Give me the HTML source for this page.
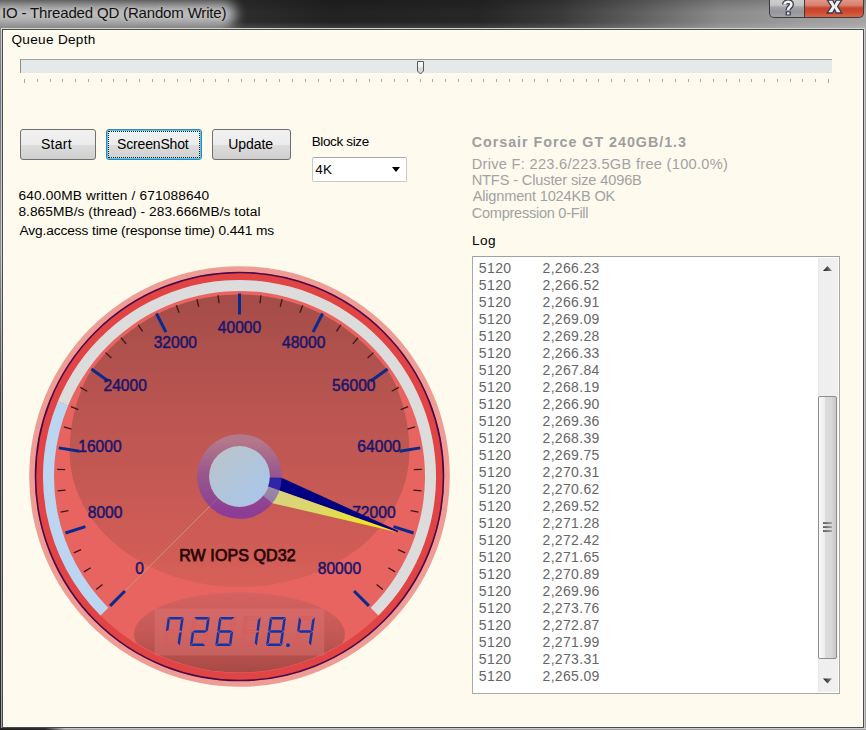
<!DOCTYPE html>
<html><head><meta charset="utf-8">
<style>
*{margin:0;padding:0;box-sizing:border-box}
html,body{width:866px;height:730px;overflow:hidden;background:#FEFAEE}
body{position:relative;font-family:"Liberation Sans",sans-serif;font-size:13px;color:#000}
.abs{position:absolute}
#titlebar{position:absolute;left:0;top:0;width:866px;height:29px;background:linear-gradient(90deg,#3a3a3a 0,#2c2c2c 250px,#222 330px,#262626 480px,#3a3a3a 560px,#606060 640px,#8a8a8a 720px,#9c9c9c 800px,#a4a4a4 866px)}
#titleshade{position:absolute;left:0;top:0;width:866px;height:29px;
 background:linear-gradient(180deg,rgba(0,0,0,0.18) 0,rgba(0,0,0,0) 12px,rgba(255,255,255,0) 22px,rgba(255,255,255,0.15) 29px)}
#title{position:absolute;left:2px;top:3.8px;font-size:15px;color:#111;white-space:nowrap;letter-spacing:-0.167px;text-shadow:0 0 4px #cfcfcf}
#glow{position:absolute;left:-16px;top:0px;width:252px;height:28px;border-radius:14px;background:#b8b8b8;filter:blur(6px)}
#framel{position:absolute;left:0;top:28px;width:1px;height:702px;background:linear-gradient(180deg,#8a8a8a 0,#707880 72px,#909090 222px,#404040 372px,#303030 572px,#2a2a2a 702px)}
#framel2{position:absolute;left:1px;top:28px;width:1px;height:702px;background:linear-gradient(180deg,#d0d0d0 0,#c0c8c8 72px,#d0d0d0 222px,#a8a8a8 372px,#a0a0a0 572px,#a0a0a0 702px)}
#framer{position:absolute;left:864px;top:28px;width:2px;height:702px;background:linear-gradient(90deg,#d0d0d0 50%,#a0a0a0 50%)}
#frameb{position:absolute;left:0;top:728px;width:866px;height:1px;background:linear-gradient(90deg,#282828 0,#303030 45px,#c8c8c8 65px,#d0d0d0 866px)}
#frameb2{position:absolute;left:0;top:729px;width:866px;height:1px;background:linear-gradient(90deg,#1c1c1c 0,#242424 45px,#a0a0a0 65px,#a0a0a0 866px)}
#content{position:absolute;left:2px;top:29px;width:862px;height:699px;background:#FEFAEE;border:1px solid #4a4a4a;box-shadow:inset 0 0 0 1px #fffff6,0 -1px 0 0 #d4d4d4}
.cap{position:absolute;top:-1px;height:20px;border:1px solid #3c3c3c;border-top:none}
#help{left:769px;width:36px;height:19px;border-radius:0 0 0 5px;background:linear-gradient(180deg,#cfcfcf 0,#c4c4c4 35%,#a4a4a6 45%,#96969c 70%,#a2a2aa 100%)}
#close{left:804px;width:60px;height:19px;border-radius:0 0 5px 0;background:linear-gradient(180deg,#e39a8c 0,#d8806e 35%,#c44630 50%,#cc4a2c 70%,#d8644a 100%)}
.lbl{position:absolute;white-space:nowrap;font-size:13px;letter-spacing:0.4px}
.btn{position:absolute;top:129px;height:31px;border:1px solid #707070;border-radius:3px;
 background:linear-gradient(180deg,#f2f2f2 0,#ebebeb 50%,#dddddd 51%,#cfcfcf 100%);text-align:center;line-height:28px;font-size:13.5px;letter-spacing:0.2px}
.bt{position:absolute;top:6.1px;white-space:nowrap;line-height:normal;font-size:14px}
.stick{position:absolute;top:79px;width:1px;height:3px;background:#a8a8a8}
.row{position:absolute;left:0;height:17px;width:340px;white-space:nowrap;color:#666;font-size:14px}
.c1{position:absolute;left:5.8px;top:1px;letter-spacing:0.4px}
.c2{position:absolute;left:69.5px;top:1px;letter-spacing:0.343px}
.gray{color:#a2a2a2}
</style></head><body>
<div id="titlebar"></div>
<div id="glow"></div>
<div id="titleshade"></div>
<div id="title">IO - Threaded QD (Random Write)</div>
<div class="cap" id="help"></div>
<div class="cap" id="close"></div>
<svg class="abs" style="left:0;top:0" width="866" height="30" viewBox="0 0 866 30">
 <g fill="none" stroke-linejoin="round">
  <path d="M784.6,4.6 C784.6,1.2 791.4,0.6 791.4,4.2 C791.4,6.8 788.2,7.2 788.2,9.6 L788.2,10.2" stroke="#3a3c4e" stroke-width="5.2" stroke-linecap="butt"/>
  <rect x="785.6" y="11.4" width="5.2" height="4" fill="#3a3c4e" stroke="none"/>
  <path d="M784.6,4.6 C784.6,1.2 791.4,0.6 791.4,4.2 C791.4,6.8 788.2,7.2 788.2,9.6 L788.2,10.2" stroke="#f2f2f2" stroke-width="2.6" stroke-linecap="butt"/>
  <rect x="786.9" y="12.4" width="2.6" height="2" fill="#f2f2f2" stroke="none"/>
  <polygon points="827.2,0 832.6,0 834.5,3.6 836.4,0 841.8,0 837.6,6.4 841.8,13 836.4,13 834.5,9.4 832.6,13 827.2,13 831.4,6.4" fill="#f0f0f0" stroke="#3a3a4e" stroke-width="1.3" stroke-linejoin="miter"/>
 </g>
</svg>
<div id="framel"></div><div id="framel2"></div><div id="framer"></div><div id="frameb"></div><div id="frameb2"></div>
<div id="content"></div>

<div class="lbl" style="left:11.5px;top:32.1px;font-size:13.6px;letter-spacing:0.3px">Queue Depth</div>
<!-- slider -->
<div class="abs" style="left:20px;top:59px;width:812px;height:14px;background:#E6E9EA;border-top:1px solid #a4a4a4;border-left:1px solid #8c8c8c"></div>
<svg class="abs" style="left:410px;top:55px" width="20" height="24" viewBox="410 55 20 24">
 <defs><linearGradient id="thg" x1="0" y1="0" x2="0" y2="1"><stop offset="0" stop-color="#fdfdfd"/><stop offset="0.4" stop-color="#f0f0f0"/><stop offset="0.5" stop-color="#dedede"/><stop offset="1" stop-color="#d4d4d4"/></linearGradient></defs>
 <path d="M417.5,61.5 H423.5 V71 L420.5,74 L417.5,71 Z" fill="url(#thg)" stroke="#5a5a5a" stroke-width="1"/>
 <path d="M418.5,62.5 H422.5" stroke="#ffffff" stroke-width="1"/>
</svg>
<div class="stick" style="left:24px;height:4px"></div>
<div class="stick" style="left:37px;height:3px"></div>
<div class="stick" style="left:50px;height:3px"></div>
<div class="stick" style="left:62px;height:3px"></div>
<div class="stick" style="left:75px;height:3px"></div>
<div class="stick" style="left:88px;height:3px"></div>
<div class="stick" style="left:101px;height:3px"></div>
<div class="stick" style="left:113px;height:3px"></div>
<div class="stick" style="left:126px;height:3px"></div>
<div class="stick" style="left:139px;height:3px"></div>
<div class="stick" style="left:152px;height:3px"></div>
<div class="stick" style="left:164px;height:3px"></div>
<div class="stick" style="left:177px;height:3px"></div>
<div class="stick" style="left:190px;height:3px"></div>
<div class="stick" style="left:203px;height:3px"></div>
<div class="stick" style="left:215px;height:3px"></div>
<div class="stick" style="left:228px;height:3px"></div>
<div class="stick" style="left:241px;height:3px"></div>
<div class="stick" style="left:254px;height:3px"></div>
<div class="stick" style="left:266px;height:3px"></div>
<div class="stick" style="left:279px;height:3px"></div>
<div class="stick" style="left:292px;height:3px"></div>
<div class="stick" style="left:305px;height:3px"></div>
<div class="stick" style="left:318px;height:3px"></div>
<div class="stick" style="left:330px;height:3px"></div>
<div class="stick" style="left:343px;height:3px"></div>
<div class="stick" style="left:356px;height:3px"></div>
<div class="stick" style="left:369px;height:3px"></div>
<div class="stick" style="left:381px;height:3px"></div>
<div class="stick" style="left:394px;height:3px"></div>
<div class="stick" style="left:407px;height:3px"></div>
<div class="stick" style="left:420px;height:3px"></div>
<div class="stick" style="left:432px;height:3px"></div>
<div class="stick" style="left:445px;height:3px"></div>
<div class="stick" style="left:458px;height:3px"></div>
<div class="stick" style="left:471px;height:3px"></div>
<div class="stick" style="left:483px;height:3px"></div>
<div class="stick" style="left:496px;height:3px"></div>
<div class="stick" style="left:509px;height:3px"></div>
<div class="stick" style="left:522px;height:3px"></div>
<div class="stick" style="left:534px;height:3px"></div>
<div class="stick" style="left:547px;height:3px"></div>
<div class="stick" style="left:560px;height:3px"></div>
<div class="stick" style="left:573px;height:3px"></div>
<div class="stick" style="left:586px;height:3px"></div>
<div class="stick" style="left:598px;height:3px"></div>
<div class="stick" style="left:611px;height:3px"></div>
<div class="stick" style="left:624px;height:3px"></div>
<div class="stick" style="left:637px;height:3px"></div>
<div class="stick" style="left:649px;height:3px"></div>
<div class="stick" style="left:662px;height:3px"></div>
<div class="stick" style="left:675px;height:3px"></div>
<div class="stick" style="left:688px;height:3px"></div>
<div class="stick" style="left:700px;height:3px"></div>
<div class="stick" style="left:713px;height:3px"></div>
<div class="stick" style="left:726px;height:3px"></div>
<div class="stick" style="left:739px;height:3px"></div>
<div class="stick" style="left:751px;height:3px"></div>
<div class="stick" style="left:764px;height:3px"></div>
<div class="stick" style="left:777px;height:3px"></div>
<div class="stick" style="left:790px;height:3px"></div>
<div class="stick" style="left:802px;height:3px"></div>
<div class="stick" style="left:815px;height:3px"></div>
<div class="stick" style="left:828px;height:4px"></div>

<div class="btn" style="left:20px;width:76px"><span class="bt" style="left:20px;letter-spacing:0.25px">Start</span></div>
<div class="btn" style="left:106px;width:96px;border-color:#3c7fb1;box-shadow:inset 0 0 0 1px #48cdf6">
 <div class="abs" style="left:1px;top:1px;right:1px;bottom:1px;border:1px dotted #222"></div><span class="bt" style="left:10px;letter-spacing:-0.156px">ScreenShot</span></div>
<div class="btn" style="left:212px;width:79px"><span class="bt" style="left:15.3px;letter-spacing:-0.08px">Update</span></div>

<div class="lbl" style="left:311.7px;top:133.6px;font-size:13.5px;letter-spacing:-0.36px">Block size</div>
<div class="abs" style="left:312px;top:157px;width:95px;height:25px;background:#fff;border:1px solid #c8c8c8;border-top-color:#a8a8a8;border-radius:2px"></div>
<div class="lbl" style="left:315.2px;top:161.8px;font-size:13.5px;letter-spacing:0.3px">4K</div>
<div class="abs" style="left:392px;top:167px;width:0;height:0;border-left:4.5px solid transparent;border-right:4.5px solid transparent;border-top:5px solid #000"></div>

<div class="lbl" style="left:18.4px;top:187.6px;font-size:13.7px;letter-spacing:0.163px">640.00MB written / 671088640</div>
<div class="lbl" style="left:18.4px;top:203.8px;font-size:13.7px;letter-spacing:0.065px">8.865MB/s (thread) - 283.666MB/s total</div>
<div class="lbl" style="left:19.4px;top:223.4px;font-size:13.7px;letter-spacing:-0.092px">Avg.access time (response time) 0.441 ms</div>

<div class="lbl gray" style="left:471.7px;top:133.6px;font-weight:bold;font-size:14.3px;letter-spacing:0.976px;color:#9e9e9e">Corsair Force GT 240GB/1.3</div>
<div class="lbl gray" style="left:471.7px;top:156px;font-size:14.6px;letter-spacing:0.297px">Drive F: 223.6/223.5GB free (100.0%)</div>
<div class="lbl gray" style="left:471.7px;top:172px;font-size:14.6px;letter-spacing:-0.142px">NTFS - Cluster size 4096B</div>
<div class="lbl gray" style="left:472.7px;top:188px;font-size:14.6px;letter-spacing:-0.189px">Alignment 1024KB OK</div>
<div class="lbl gray" style="left:471.7px;top:204.8px;font-size:14.6px;letter-spacing:-0.282px">Compression 0-Fill</div>
<div class="lbl" style="left:472px;top:232.5px;font-size:13.6px;letter-spacing:0.4px">Log</div>

<!-- listbox -->
<div class="abs" style="left:472px;top:256px;width:368px;height:438px;background:#fff;border:1px solid #a8a8a8;border-top-color:#a0a0a0">
 <div class="abs" style="left:0;top:2px;width:346px;height:432px;overflow:hidden">
<div class="row" style="top:0px"><span class="c1">5120</span><span class="c2">2,266.23</span></div>
<div class="row" style="top:17px"><span class="c1">5120</span><span class="c2">2,266.52</span></div>
<div class="row" style="top:34px"><span class="c1">5120</span><span class="c2">2,266.91</span></div>
<div class="row" style="top:51px"><span class="c1">5120</span><span class="c2">2,269.09</span></div>
<div class="row" style="top:68px"><span class="c1">5120</span><span class="c2">2,269.28</span></div>
<div class="row" style="top:85px"><span class="c1">5120</span><span class="c2">2,266.33</span></div>
<div class="row" style="top:102px"><span class="c1">5120</span><span class="c2">2,267.84</span></div>
<div class="row" style="top:119px"><span class="c1">5120</span><span class="c2">2,268.19</span></div>
<div class="row" style="top:136px"><span class="c1">5120</span><span class="c2">2,266.90</span></div>
<div class="row" style="top:153px"><span class="c1">5120</span><span class="c2">2,269.36</span></div>
<div class="row" style="top:170px"><span class="c1">5120</span><span class="c2">2,268.39</span></div>
<div class="row" style="top:187px"><span class="c1">5120</span><span class="c2">2,269.75</span></div>
<div class="row" style="top:204px"><span class="c1">5120</span><span class="c2">2,270.31</span></div>
<div class="row" style="top:221px"><span class="c1">5120</span><span class="c2">2,270.62</span></div>
<div class="row" style="top:238px"><span class="c1">5120</span><span class="c2">2,269.52</span></div>
<div class="row" style="top:255px"><span class="c1">5120</span><span class="c2">2,271.28</span></div>
<div class="row" style="top:272px"><span class="c1">5120</span><span class="c2">2,272.42</span></div>
<div class="row" style="top:289px"><span class="c1">5120</span><span class="c2">2,271.65</span></div>
<div class="row" style="top:306px"><span class="c1">5120</span><span class="c2">2,270.89</span></div>
<div class="row" style="top:323px"><span class="c1">5120</span><span class="c2">2,269.96</span></div>
<div class="row" style="top:340px"><span class="c1">5120</span><span class="c2">2,273.76</span></div>
<div class="row" style="top:357px"><span class="c1">5120</span><span class="c2">2,272.87</span></div>
<div class="row" style="top:374px"><span class="c1">5120</span><span class="c2">2,271.99</span></div>
<div class="row" style="top:391px"><span class="c1">5120</span><span class="c2">2,273.31</span></div>
<div class="row" style="top:408px"><span class="c1">5120</span><span class="c2">2,265.09</span></div>
 </div>
 <div class="abs" style="left:345px;top:1px;width:20px;height:434px;background:linear-gradient(90deg,#e6e6e6 0,#efefef 2px,#f0f0f0 100%)"></div>
 <div class="abs" style="left:345px;top:139px;width:19px;height:263px;border:1px solid #8e8e8e;border-radius:2px;background:linear-gradient(90deg,#fafafa 0,#ececec 35%,#dcdcdc 38%,#d8d8d8 75%,#c6c6c6 100%)"></div>
 <svg class="abs" style="left:345px;top:0" width="20" height="436" viewBox="0 0 20 436">
  <defs><linearGradient id="arg" x1="0" y1="0" x2="1" y2="0"><stop offset="0" stop-color="#1a1a1a"/><stop offset="1" stop-color="#8a8a8a"/></linearGradient></defs>
  <polygon points="5,14 9.5,9 14,14" fill="url(#arg)"/>
  <polygon points="5,421.5 14,421.5 9.5,426.5" fill="url(#arg)"/>
  <g><rect x="5" y="265.4" width="9" height="1.3" fill="url(#arg)"/><rect x="5" y="269.4" width="9" height="1.3" fill="url(#arg)"/><rect x="5" y="273.4" width="9" height="1.3" fill="url(#arg)"/></g>
 </svg>
</div>

<svg width="866" height="730" viewBox="0 0 866 730" style="position:absolute;left:0;top:0">
<defs>
<linearGradient id="dark" gradientUnits="userSpaceOnUse" x1="0" y1="290" x2="0" y2="591">
 <stop offset="0" stop-color="#A44C48"/><stop offset="0.4" stop-color="#BA5551"/><stop offset="0.85" stop-color="#D05C56"/><stop offset="1" stop-color="#D8605A"/>
</linearGradient>
<clipPath id="faceclip2"><circle cx="239.5" cy="476.5" r="196"/></clipPath>
<clipPath id="faceclip"><circle cx="239.5" cy="476.5" r="182"/></clipPath>
<linearGradient id="ringg" x1="0" y1="0" x2="0" y2="1">
 <stop offset="0" stop-color="#A8A0D0" stop-opacity="0.45"/><stop offset="0.5" stop-color="#6050D0" stop-opacity="0.47"/><stop offset="1" stop-color="#6428C0" stop-opacity="0.6"/>
</linearGradient>
<linearGradient id="hubg" x1="0" y1="0" x2="1" y2="1">
 <stop offset="0" stop-color="#BCC4C8"/><stop offset="1" stop-color="#A6C6EE"/>
</linearGradient>
<linearGradient id="yelg" gradientUnits="userSpaceOnUse" x1="239.5" y1="476.5" x2="397.6" y2="532.2">
 <stop offset="0" stop-color="#D4D090"/><stop offset="0.5" stop-color="#DCD868"/><stop offset="1" stop-color="#F2EE00"/>
</linearGradient>
<linearGradient id="lcdg" x1="0" y1="0" x2="0" y2="1">
 <stop offset="0" stop-color="#D46260"/><stop offset="0.45" stop-color="#C65A56"/><stop offset="1" stop-color="#A64844"/>
</linearGradient>
<filter id="lblur" x="-5%" y="-5%" width="110%" height="110%"><feGaussianBlur stdDeviation="0.35"/></filter>
</defs>
<circle cx="239.5" cy="476.5" r="210.3" fill="#EE9C94"/>
<circle cx="239.5" cy="476.5" r="204.5" fill="#E04444"/>
<circle cx="239.5" cy="476.5" r="204" fill="none" stroke="#4A0A4A" stroke-width="1.6"/>
<circle cx="239.5" cy="476.5" r="196.5" fill="#E86460"/>
<path d="M100.55,615.45 A196.5,196.5 0 0 1 57.96,401.30 L68.12,405.51 A185.5,185.5 0 0 0 108.33,607.67 Z" fill="#BCD6F2"/>
<path d="M57.96,401.30 A196.5,196.5 0 1 1 378.45,615.45 L370.67,607.67 A185.5,185.5 0 1 0 68.12,405.51 Z" fill="#DCDCDC"/>
<path d="M69.5,452 A170,170 0 0 1 409.5,452 A170,135 0 0 1 69.5,452 Z" fill="url(#dark)" clip-path="url(#faceclip)"/>
<line x1="110.10" y1="605.90" x2="124.95" y2="591.05" stroke="#0A2A8C" stroke-width="3"/>
<line x1="96.18" y1="589.48" x2="102.46" y2="584.53" stroke="#3A1818" stroke-width="1.3"/>
<line x1="83.89" y1="571.86" x2="90.71" y2="567.68" stroke="#3A1818" stroke-width="1.3"/>
<line x1="73.76" y1="552.91" x2="81.03" y2="549.56" stroke="#3A1818" stroke-width="1.3"/>
<line x1="65.46" y1="533.05" x2="85.43" y2="526.56" stroke="#0A2A8C" stroke-width="3"/>
<line x1="60.51" y1="512.10" x2="68.35" y2="510.54" stroke="#3A1818" stroke-width="1.3"/>
<line x1="57.56" y1="490.82" x2="65.54" y2="490.19" stroke="#3A1818" stroke-width="1.3"/>
<line x1="57.14" y1="469.34" x2="65.13" y2="469.65" stroke="#3A1818" stroke-width="1.3"/>
<line x1="58.75" y1="447.87" x2="79.49" y2="451.16" stroke="#0A2A8C" stroke-width="3"/>
<line x1="63.85" y1="426.96" x2="71.55" y2="429.13" stroke="#3A1818" stroke-width="1.3"/>
<line x1="70.89" y1="406.66" x2="78.28" y2="409.72" stroke="#3A1818" stroke-width="1.3"/>
<line x1="80.27" y1="387.33" x2="87.25" y2="391.24" stroke="#3A1818" stroke-width="1.3"/>
<line x1="91.45" y1="368.94" x2="108.44" y2="381.28" stroke="#0A2A8C" stroke-width="3"/>
<line x1="105.49" y1="352.62" x2="111.36" y2="358.05" stroke="#3A1818" stroke-width="1.3"/>
<line x1="120.98" y1="337.73" x2="126.17" y2="343.81" stroke="#3A1818" stroke-width="1.3"/>
<line x1="138.11" y1="324.76" x2="142.55" y2="331.41" stroke="#3A1818" stroke-width="1.3"/>
<line x1="156.42" y1="313.45" x2="165.95" y2="332.16" stroke="#0A2A8C" stroke-width="3"/>
<line x1="176.33" y1="305.28" x2="179.10" y2="312.79" stroke="#3A1818" stroke-width="1.3"/>
<line x1="196.90" y1="299.04" x2="198.76" y2="306.82" stroke="#3A1818" stroke-width="1.3"/>
<line x1="218.05" y1="295.27" x2="218.99" y2="303.21" stroke="#3A1818" stroke-width="1.3"/>
<line x1="239.50" y1="293.50" x2="239.50" y2="314.50" stroke="#0A2A8C" stroke-width="3"/>
<line x1="260.95" y1="295.27" x2="260.01" y2="303.21" stroke="#3A1818" stroke-width="1.3"/>
<line x1="282.10" y1="299.04" x2="280.24" y2="306.82" stroke="#3A1818" stroke-width="1.3"/>
<line x1="302.67" y1="305.28" x2="299.90" y2="312.79" stroke="#3A1818" stroke-width="1.3"/>
<line x1="322.58" y1="313.45" x2="313.05" y2="332.16" stroke="#0A2A8C" stroke-width="3"/>
<line x1="340.89" y1="324.76" x2="336.45" y2="331.41" stroke="#3A1818" stroke-width="1.3"/>
<line x1="358.02" y1="337.73" x2="352.83" y2="343.81" stroke="#3A1818" stroke-width="1.3"/>
<line x1="373.51" y1="352.62" x2="367.64" y2="358.05" stroke="#3A1818" stroke-width="1.3"/>
<line x1="387.55" y1="368.94" x2="370.56" y2="381.28" stroke="#0A2A8C" stroke-width="3"/>
<line x1="398.73" y1="387.33" x2="391.75" y2="391.24" stroke="#3A1818" stroke-width="1.3"/>
<line x1="408.11" y1="406.66" x2="400.72" y2="409.72" stroke="#3A1818" stroke-width="1.3"/>
<line x1="415.15" y1="426.96" x2="407.45" y2="429.13" stroke="#3A1818" stroke-width="1.3"/>
<line x1="420.25" y1="447.87" x2="399.51" y2="451.16" stroke="#0A2A8C" stroke-width="3"/>
<line x1="421.86" y1="469.34" x2="413.87" y2="469.65" stroke="#3A1818" stroke-width="1.3"/>
<line x1="421.44" y1="490.82" x2="413.46" y2="490.19" stroke="#3A1818" stroke-width="1.3"/>
<line x1="418.49" y1="512.10" x2="410.65" y2="510.54" stroke="#3A1818" stroke-width="1.3"/>
<line x1="413.54" y1="533.05" x2="393.57" y2="526.56" stroke="#0A2A8C" stroke-width="3"/>
<line x1="405.24" y1="552.91" x2="397.97" y2="549.56" stroke="#3A1818" stroke-width="1.3"/>
<line x1="395.11" y1="571.86" x2="388.29" y2="567.68" stroke="#3A1818" stroke-width="1.3"/>
<line x1="382.82" y1="589.48" x2="376.54" y2="584.53" stroke="#3A1818" stroke-width="1.3"/>
<line x1="368.90" y1="605.90" x2="354.05" y2="591.05" stroke="#0A2A8C" stroke-width="3"/>
<text x="139.59" y="573.91" text-anchor="middle" font-family="Liberation Sans" font-size="15.6" fill="#181266" stroke="#221A6E" stroke-width="0.5">0</text>
<text x="105.12" y="517.66" text-anchor="middle" font-family="Liberation Sans" font-size="15.6" fill="#181266" stroke="#221A6E" stroke-width="0.5">8000</text>
<text x="99.94" y="451.90" text-anchor="middle" font-family="Liberation Sans" font-size="15.6" fill="#181266" stroke="#221A6E" stroke-width="0.5">16000</text>
<text x="125.19" y="390.95" text-anchor="middle" font-family="Liberation Sans" font-size="15.6" fill="#181266" stroke="#221A6E" stroke-width="0.5">24000</text>
<text x="175.35" y="348.10" text-anchor="middle" font-family="Liberation Sans" font-size="15.6" fill="#181266" stroke="#221A6E" stroke-width="0.5">32000</text>
<text x="239.50" y="332.70" text-anchor="middle" font-family="Liberation Sans" font-size="15.6" fill="#181266" stroke="#221A6E" stroke-width="0.5">40000</text>
<text x="303.65" y="348.10" text-anchor="middle" font-family="Liberation Sans" font-size="15.6" fill="#181266" stroke="#221A6E" stroke-width="0.5">48000</text>
<text x="353.81" y="390.95" text-anchor="middle" font-family="Liberation Sans" font-size="15.6" fill="#181266" stroke="#221A6E" stroke-width="0.5">56000</text>
<text x="379.06" y="451.90" text-anchor="middle" font-family="Liberation Sans" font-size="15.6" fill="#181266" stroke="#221A6E" stroke-width="0.5">64000</text>
<text x="373.88" y="517.66" text-anchor="middle" font-family="Liberation Sans" font-size="15.6" fill="#181266" stroke="#221A6E" stroke-width="0.5">72000</text>
<text x="339.41" y="573.91" text-anchor="middle" font-family="Liberation Sans" font-size="15.6" fill="#181266" stroke="#221A6E" stroke-width="0.5">80000</text>
<text x="237.5" y="561" text-anchor="middle" font-family="Liberation Sans" font-size="16" fill="#260404" stroke="#2A0606" stroke-width="0.75" letter-spacing="0.1">RW IOPS QD32</text>
<ellipse cx="239.5" cy="634" rx="105.5" ry="41.5" fill="url(#lcdg)" clip-path="url(#faceclip2)"/>
<rect x="154.6" y="608.5" width="169.6" height="47" fill="#E07878" fill-opacity="0.42"/>
<polygon points="168.15,617.10 183.45,617.10 180.60,619.60 170.30,619.60" fill="#0E34A8"/>
<polygon points="166.53,631.50 168.82,630.25 179.12,630.25 181.08,631.50 178.78,632.75 168.48,632.75" fill="none" stroke="#D65C5C" stroke-opacity="0.9" stroke-width="1.1"/>
<polygon points="167.00,643.40 177.30,643.40 179.45,645.90 164.15,645.90" fill="none" stroke="#D65C5C" stroke-opacity="0.9" stroke-width="1.1"/>
<polygon points="167.75,617.45 169.90,619.95 168.52,629.90 165.85,631.15" fill="#0E34A8"/>
<polygon points="165.75,631.85 168.08,633.10 166.70,643.05 163.85,645.55" fill="none" stroke="#D65C5C" stroke-opacity="0.9" stroke-width="1.1"/>
<polygon points="183.75,617.45 181.85,631.15 179.52,629.90 180.90,619.95" fill="#0E34A8"/>
<polygon points="181.75,631.85 179.85,645.55 177.70,643.05 179.08,633.10" fill="#0E34A8"/>
<polygon points="194.15,617.10 209.45,617.10 206.60,619.60 196.30,619.60" fill="#0E34A8"/>
<polygon points="192.53,631.50 194.82,630.25 205.12,630.25 207.08,631.50 204.78,632.75 194.48,632.75" fill="#0E34A8"/>
<polygon points="193.00,643.40 203.30,643.40 205.45,645.90 190.15,645.90" fill="#0E34A8"/>
<polygon points="193.75,617.45 195.90,619.95 194.52,629.90 191.85,631.15" fill="none" stroke="#D65C5C" stroke-opacity="0.9" stroke-width="1.1"/>
<polygon points="191.75,631.85 194.08,633.10 192.70,643.05 189.85,645.55" fill="#0E34A8"/>
<polygon points="209.75,617.45 207.85,631.15 205.52,629.90 206.90,619.95" fill="#0E34A8"/>
<polygon points="207.75,631.85 205.85,645.55 203.70,643.05 205.08,633.10" fill="none" stroke="#D65C5C" stroke-opacity="0.9" stroke-width="1.1"/>
<polygon points="219.55,617.10 234.85,617.10 232.00,619.60 221.70,619.60" fill="#0E34A8"/>
<polygon points="217.92,631.50 220.22,630.25 230.52,630.25 232.47,631.50 230.18,632.75 219.88,632.75" fill="#0E34A8"/>
<polygon points="218.40,643.40 228.70,643.40 230.85,645.90 215.55,645.90" fill="#0E34A8"/>
<polygon points="219.15,617.45 221.30,619.95 219.92,629.90 217.25,631.15" fill="#0E34A8"/>
<polygon points="217.15,631.85 219.48,633.10 218.10,643.05 215.25,645.55" fill="#0E34A8"/>
<polygon points="235.15,617.45 233.25,631.15 230.92,629.90 232.30,619.95" fill="none" stroke="#D65C5C" stroke-opacity="0.9" stroke-width="1.1"/>
<polygon points="233.15,631.85 231.25,645.55 229.10,643.05 230.48,633.10" fill="#0E34A8"/>
<polygon points="245.15,617.10 260.45,617.10 257.60,619.60 247.30,619.60" fill="none" stroke="#D65C5C" stroke-opacity="0.9" stroke-width="1.1"/>
<polygon points="243.53,631.50 245.82,630.25 256.12,630.25 258.07,631.50 255.78,632.75 245.48,632.75" fill="none" stroke="#D65C5C" stroke-opacity="0.9" stroke-width="1.1"/>
<polygon points="244.00,643.40 254.30,643.40 256.45,645.90 241.15,645.90" fill="none" stroke="#D65C5C" stroke-opacity="0.9" stroke-width="1.1"/>
<polygon points="244.75,617.45 246.90,619.95 245.52,629.90 242.85,631.15" fill="none" stroke="#D65C5C" stroke-opacity="0.9" stroke-width="1.1"/>
<polygon points="242.75,631.85 245.08,633.10 243.70,643.05 240.85,645.55" fill="none" stroke="#D65C5C" stroke-opacity="0.9" stroke-width="1.1"/>
<polygon points="260.75,617.45 258.85,631.15 256.52,629.90 257.90,619.95" fill="#0E34A8"/>
<polygon points="258.75,631.85 256.85,645.55 254.70,643.05 256.08,633.10" fill="#0E34A8"/>
<polygon points="270.35,617.10 285.65,617.10 282.80,619.60 272.50,619.60" fill="#0E34A8"/>
<polygon points="268.73,631.50 271.02,630.25 281.32,630.25 283.27,631.50 280.98,632.75 270.68,632.75" fill="#0E34A8"/>
<polygon points="269.20,643.40 279.50,643.40 281.65,645.90 266.35,645.90" fill="#0E34A8"/>
<polygon points="269.95,617.45 272.10,619.95 270.72,629.90 268.05,631.15" fill="#0E34A8"/>
<polygon points="267.95,631.85 270.28,633.10 268.90,643.05 266.05,645.55" fill="#0E34A8"/>
<polygon points="285.95,617.45 284.05,631.15 281.72,629.90 283.10,619.95" fill="#0E34A8"/>
<polygon points="283.95,631.85 282.05,645.55 279.90,643.05 281.28,633.10" fill="#0E34A8"/>
<polygon points="299.35,617.10 314.65,617.10 311.80,619.60 301.50,619.60" fill="none" stroke="#D65C5C" stroke-opacity="0.9" stroke-width="1.1"/>
<polygon points="297.73,631.50 300.02,630.25 310.32,630.25 312.27,631.50 309.98,632.75 299.68,632.75" fill="#0E34A8"/>
<polygon points="298.20,643.40 308.50,643.40 310.65,645.90 295.35,645.90" fill="none" stroke="#D65C5C" stroke-opacity="0.9" stroke-width="1.1"/>
<polygon points="298.95,617.45 301.10,619.95 299.72,629.90 297.05,631.15" fill="#0E34A8"/>
<polygon points="296.95,631.85 299.28,633.10 297.90,643.05 295.05,645.55" fill="none" stroke="#D65C5C" stroke-opacity="0.9" stroke-width="1.1"/>
<polygon points="314.95,617.45 313.05,631.15 310.72,629.90 312.10,619.95" fill="#0E34A8"/>
<polygon points="312.95,631.85 311.05,645.55 308.90,643.05 310.28,633.10" fill="#0E34A8"/>
<circle cx="288" cy="645.2" r="1.9" fill="#0E34A8"/>
<line x1="239.50" y1="476.50" x2="124.95" y2="591.05" stroke="#C8947E" stroke-width="1"/>
<polygon points="239.5,476.5 281.48,477.71 398.05,530.85 397.58,532.17" fill="#000080"/>
<polygon points="239.5,476.5 397.58,532.17 272.51,503.18" fill="url(#yelg)"/>
<circle cx="239.5" cy="476.5" r="36.4" fill="none" stroke="url(#ringg)" stroke-width="11.9"/>
<circle cx="239.5" cy="476.5" r="30.4" fill="url(#hubg)"/>
</svg>
</body></html>
